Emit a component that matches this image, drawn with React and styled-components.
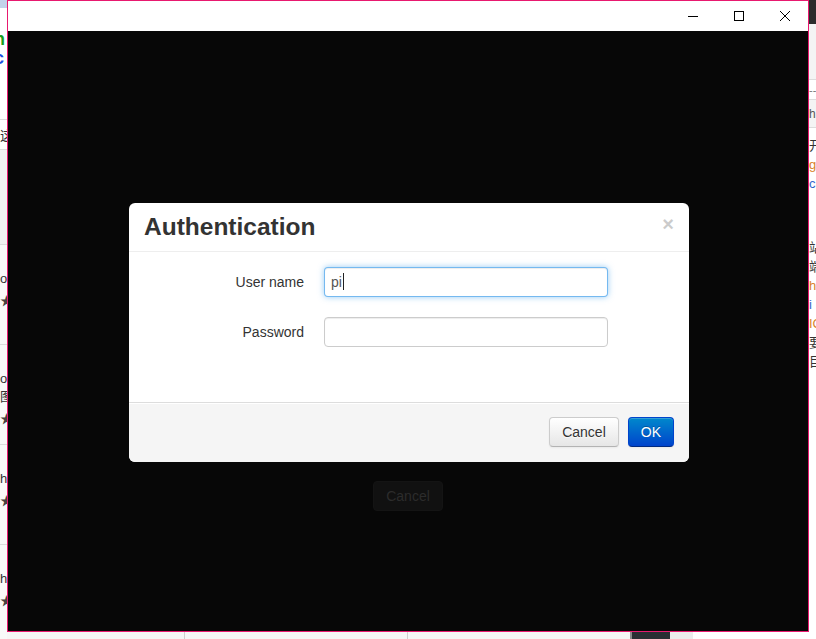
import React from "react";
import styled, { createGlobalStyle } from "styled-components";

const GlobalStyle = createGlobalStyle`
  html, body {
    margin: 0;
    padding: 0;
    background: #fafafa;
  }
  body {
    font-family: "Liberation Sans", Arial, sans-serif;
    overflow: hidden;
  }
  * {
    box-sizing: border-box;
  }
`;

const Desktop = styled.div`
  display: grid;
  grid-template-columns: 7px 802px 7px;
  grid-template-rows: 632px 7px;
  width: 816px;
  height: 639px;
  overflow: hidden;
`;

/* ---- background app peeking out at the edges ---- */

const LeftStrip = styled.div`
  display: flex;
  flex-direction: column;
  overflow: hidden;
  background: #fff;
  grid-row: 1 / 3;
`;

const Band = styled.div`
  height: ${(p) => p.h}px;
  flex-shrink: 0;
  background: ${(p) => p.bg || "transparent"};
  border-bottom: ${(p) => (p.line ? "1px solid #dcdcdc" : "none")};
  padding-top: ${(p) => p.pt || 0}px;
  overflow: hidden;
`;

const Frag = styled.div`
  font-family: "Liberation Sans", Arial, "Noto Sans CJK SC", sans-serif;
  font-size: ${(p) => p.size || 13}px;
  font-weight: ${(p) => (p.bold ? 700 : 400)};
  line-height: ${(p) => p.lh || 20}px;
  color: ${(p) => p.color || "#333"};
  white-space: nowrap;
  margin-left: ${(p) => p.ml || 0}px;
`;

const RightStrip = styled.div`
  display: flex;
  flex-direction: column;
  overflow: hidden;
  background: #fff;
  grid-row: 1 / 3;
  grid-column: 3;
`;

const BottomStrip = styled.div`
  grid-column: 2;
  grid-row: 2;
  display: flex;
  background: #f6f6f6;
`;

const BottomCell = styled.div`
  width: ${(p) => p.w}px;
  flex-shrink: 0;
  background: ${(p) => p.bg || "transparent"};
  border-right: ${(p) => p.edge || "none"};
`;

/* ---- the window ---- */

const Window = styled.div`
  grid-column: 2;
  grid-row: 1;
  display: flex;
  flex-direction: column;
  border: 1px solid #e8196f;
  background: #fff;
`;

const TitleBar = styled.div`
  height: 30px;
  flex-shrink: 0;
  display: flex;
  justify-content: flex-end;
  background: #fff;
`;

const CaptionButton = styled.div`
  width: 46px;
  height: 30px;
  display: flex;
  align-items: center;
  justify-content: center;
`;

const Content = styled.div`
  position: relative;
  flex: 1;
  background: #070707;
`;

const UnderPage = styled.div`
  display: flex;
  justify-content: center;
  padding-top: 450px;
`;

const GhostButton = styled.div`
  width: 70px;
  height: 30px;
  border-radius: 4px;
  background: #111;
  border: 1px solid #141414;
  color: #2c2c2c;
  font-size: 14px;
  line-height: 28px;
  text-align: center;
`;

const Overlay = styled.div`
  position: absolute;
  inset: 0;
  display: flex;
  align-items: center;
  justify-content: center;
  padding: 3px 0 0 2px;
`;

const Modal = styled.div`
  width: 560px;
  background: #fff;
  border-radius: 6px;
  overflow: hidden;
  color: #333;
  font-size: 14px;
`;

const ModalHeader = styled.div`
  display: flex;
  justify-content: space-between;
  align-items: flex-start;
  padding: 9px 15px;
  border-bottom: 1px solid #eee;
`;

const Title = styled.h3`
  margin: 0;
  font-size: 24.5px;
  line-height: 30px;
  font-weight: 700;
  color: #333;
`;

const CloseX = styled.span`
  margin-top: 2px;
  font-size: 20px;
  font-weight: 700;
  line-height: 20px;
  color: #000;
  opacity: 0.2;
`;

const ModalBody = styled.div`
  padding: 15px 15px 35px;
`;

const ControlGroup = styled.div`
  display: flex;
  align-items: flex-start;
  margin-bottom: 20px;
`;

const Label = styled.label`
  width: 160px;
  padding-top: 5px;
  margin-right: 20px;
  text-align: right;
  line-height: 20px;
  color: #333;
`;

const TextBox = styled.div`
  width: 284px;
  height: 30px;
  padding: 4px 6px;
  border: 1px solid ${(p) => (p.focused ? "rgba(82,168,236,0.8)" : "#ccc")};
  border-radius: 4px;
  box-shadow: inset 0 1px 1px rgba(0, 0, 0, 0.075)
    ${(p) => (p.focused ? ", 0 0 6px rgba(82,168,236,0.6)" : "")};
  color: #555;
  font-size: 14px;
  line-height: 20px;
  background: #fff;
`;

const Caret = styled.span`
  display: inline-block;
  width: 1px;
  height: 17px;
  margin-left: 1px;
  background: #222;
  vertical-align: -3px;
`;

const ModalFooter = styled.div`
  display: flex;
  justify-content: flex-end;
  gap: 9px;
  padding: 14px 15px 15px;
  border-top: 1px solid #ddd;
  background: #f5f5f5;
  box-shadow: inset 0 1px 0 #fff;
`;

const Button = styled.button`
  height: 30px;
  padding: 4px 12px;
  font-family: "Liberation Sans", Arial, sans-serif;
  font-size: 14px;
  line-height: 20px;
  border-radius: 4px;
  cursor: pointer;
  color: ${(p) => (p.primary ? "#fff" : "#333")};
  text-shadow: ${(p) =>
    p.primary ? "0 -1px 0 rgba(0,0,0,0.25)" : "0 1px 1px rgba(255,255,255,0.75)"};
  background: ${(p) =>
    p.primary
      ? "linear-gradient(#0088cc, #0044cc)"
      : "linear-gradient(#ffffff, #e6e6e6)"};
  border: 1px solid
    ${(p) => (p.primary ? "#0044cc" : "#cccccc")};
  border-bottom-color: ${(p) => (p.primary ? "#002a80" : "#b3b3b3")};
  box-shadow: inset 0 1px 0 rgba(255, 255, 255, 0.2),
    0 1px 2px rgba(0, 0, 0, 0.05);
`;

const Glyph = ({ children }) => (
  <svg width="10" height="10" viewBox="0 0 10 10" fill="none" stroke="#000" strokeWidth="1">
    {children}
  </svg>
);

const ItemRow = ({ lines }) => (
  <Band h={100} line bg="#f9f9f9" pt={25}>
    {lines.map((t, i) => (
      <Frag key={i} lh={18}>{t}</Frag>
    ))}
    <Frag lh={26} color="#444">★</Frag>
  </Band>
);

const App = () => (
  <>
    <GlobalStyle />
    <Desktop>
      <LeftStrip>
        <Band h={8} bg="#c3d3ea" />
        <Band h={112} line pt={22}>
          <Frag size={18} bold lh={19} color="#1a9c1a" ml={-6}>n</Frag>
          <Frag size={18} bold lh={19} color="#1f4fe0" ml={-6}>c</Frag>
        </Band>
        <Band h={30} line pt={6}>
          <Frag>这里</Frag>
        </Band>
        <Band h={95} line bg="#f1f1f1" />
        <ItemRow lines={["oo"]} />
        <ItemRow lines={["oo", "图"]} />
        <ItemRow lines={["hh"]} />
        <ItemRow lines={["hh"]} />
      </LeftStrip>

      <Window>
        <TitleBar>
          <CaptionButton>
            <Glyph>
              <path d="M0 5.5h10" />
            </Glyph>
          </CaptionButton>
          <CaptionButton>
            <Glyph>
              <rect x="0.5" y="0.5" width="9" height="9" />
            </Glyph>
          </CaptionButton>
          <CaptionButton>
            <Glyph>
              <path d="M0 0l10 10M10 0L0 10" />
            </Glyph>
          </CaptionButton>
        </TitleBar>
        <Content>
          <UnderPage>
            <GhostButton>Cancel</GhostButton>
          </UnderPage>
          <Overlay>
            <Modal>
              <ModalHeader>
                <Title>Authentication</Title>
                <CloseX>×</CloseX>
              </ModalHeader>
              <ModalBody>
                <ControlGroup>
                  <Label>User name</Label>
                  <TextBox focused role="textbox">
                    pi
                    <Caret />
                  </TextBox>
                </ControlGroup>
                <ControlGroup>
                  <Label>Password</Label>
                  <TextBox role="textbox" />
                </ControlGroup>
              </ModalBody>
              <ModalFooter>
                <Button>Cancel</Button>
                <Button primary>OK</Button>
              </ModalFooter>
            </Modal>
          </Overlay>
        </Content>
      </Window>

      <RightStrip>
        <Band h={24} bg="#2c2c2c" />
        <Band h={56} line bg="#f4f4f4" />
        <Band h={20} line pt={0}>
          <Frag size={11} color="#777">--</Frag>
        </Band>
        <Band h={28} line bg="#f4f4f4" pt={4}>
          <Frag size={12} color="#555">h</Frag>
        </Band>
        <Band h={110} pt={8}>
          <Frag size={13} lh={19}>开</Frag>
          <Frag size={13} lh={19} color="#d9822b">g</Frag>
          <Frag size={13} lh={19} color="#3366cc">c</Frag>
        </Band>
        <Band h={260} pt={0}>
          <Frag size={13} lh={19}>站</Frag>
          <Frag size={13} lh={19}>端</Frag>
          <Frag size={13} lh={19} color="#d9822b">h</Frag>
          <Frag size={13} lh={19} color="#3366cc">i</Frag>
          <Frag size={13} lh={19} color="#d9822b">IC</Frag>
          <Frag size={13} lh={19}>要</Frag>
          <Frag size={13} lh={19}>目</Frag>
        </Band>
      </RightStrip>

      <BottomStrip>
        <BottomCell w={178} edge="1px solid #cfcfcf" />
        <BottomCell w={223} edge="1px solid #cfcfcf" />
        <BottomCell w={222} />
        <BottomCell w={2} bg="#8a8a8a" />
        <BottomCell w={38} bg="#2a2e33" />
        <BottomCell w={23} bg="#ececec" />
        <BottomCell w={116} bg="#fff" />
      </BottomStrip>
    </Desktop>
  </>
);

export default App;
